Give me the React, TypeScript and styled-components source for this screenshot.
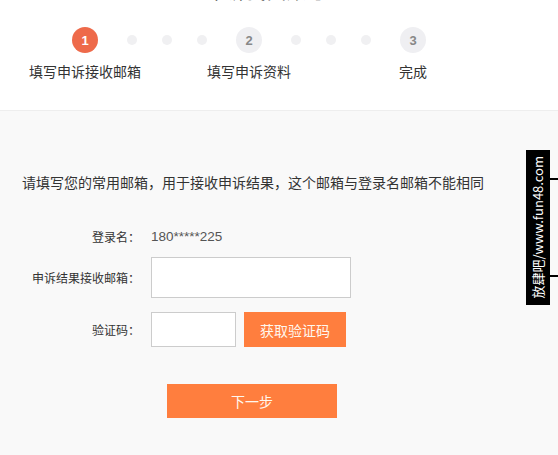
import React from "react";
import styled, { createGlobalStyle } from "styled-components";

const GlobalStyle = createGlobalStyle`
  html, body {
    margin: 0;
    padding: 0;
    background: #f9f9f9;
    font-family: "Noto Sans CJK SC", "Microsoft YaHei", sans-serif;
    color: #333;
  }
  * { box-sizing: border-box; }
`;

const steps = [
  { num: 1, label: "填写申诉接收邮箱" },
  { num: 2, label: "填写申诉资料" },
  { num: 3, label: "完成" },
];

const App = () => {
  return (
    <Page>
      <GlobalStyle />
      <Header>
        <Title>申诉找回账号</Title>
        <Steps>
          {steps.map((s, i) => (
            <React.Fragment key={s.num}>
              {i > 0 && (
                <Connector>
                  <Dot />
                  <Dot />
                  <Dot />
                </Connector>
              )}
              <Step>
                <Circle $active={i === 0}>{s.num}</Circle>
                <StepLabel>{s.label}</StepLabel>
              </Step>
            </React.Fragment>
          ))}
        </Steps>
      </Header>
      <Body>
        <Intro>请填写您的常用邮箱，用于接收申诉结果，这个邮箱与登录名邮箱不能相同</Intro>
        <Form>
          <Row $top={35}>
            <Label>登录名：</Label>
            <Value>180*****225</Value>
          </Row>
          <Row $top={10}>
            <Label>申诉结果接收邮箱：</Label>
            <Input $w={200} $h={41} />
          </Row>
          <Row $top={14}>
            <Label>验证码：</Label>
            <Input $w={85} $h={35} />
            <CodeButton>获取验证码</CodeButton>
          </Row>
          <NextButton>下一步</NextButton>
        </Form>
      </Body>
      <SideBadge>
        <BadgeText>放肆吧/www.fun48.com</BadgeText>
        <BadgeLine $top={28} />
        <BadgeLine $top={125} />
      </SideBadge>
    </Page>
  );
};

const Page = styled.div`
  width: 100%;
  min-height: 100vh;
  background: #f9f9f9;
  overflow: hidden;
`;

const Header = styled.div`
  display: flow-root;
  background: #fff;
  border-bottom: 1px solid #eeeeee;
  height: 111px;
`;

const Title = styled.div`
  margin-top: -21px;
  height: 24px;
  line-height: 24px;
  font-size: 19px;
  letter-spacing: 1px;
  text-align: center;
  width: 534px;
  color: #444;
`;

const Steps = styled.div`
  display: flex;
  align-items: flex-start;
  padding-left: 72px;
  margin-top: 24px;
`;

const Step = styled.div`
  width: 26px;
  display: flex;
  flex-direction: column;
  align-items: center;
`;

const Circle = styled.div<{ $active: boolean }>`
  width: 26px;
  height: 26px;
  border-radius: 50%;
  display: flex;
  align-items: center;
  justify-content: center;
  font-family: "Liberation Sans", Arial, sans-serif;
  font-weight: 700;
  font-size: 13px;
  background: ${(p) => (p.$active ? "#ee6a4a" : "#efeff2")};
  color: ${(p) => (p.$active ? "#fff" : "#888")};
`;

const StepLabel = styled.div`
  margin-top: 8px;
  white-space: nowrap;
  font-size: 14px;
  line-height: 20px;
  color: #333;
`;

const Connector = styled.div`
  display: flex;
  align-items: center;
  gap: 25px;
  height: 26px;
  padding: 0 29px;
`;

const Dot = styled.span`
  width: 10px;
  height: 10px;
  border-radius: 50%;
  background: #f0f0f2;
`;

const Body = styled.div`
  padding: 61px 0 40px 22px;
`;

const Intro = styled.div`
  font-size: 14px;
  line-height: 20px;
  color: #333;
`;

const Form = styled.div`
  display: flex;
  flex-direction: column;
  margin-left: -22px;
`;

const Row = styled.div<{ $top: number }>`
  display: flex;
  align-items: center;
  margin-top: ${(p) => p.$top}px;
`;

const Label = styled.div`
  width: 141px;
  padding-right: 1px;
  text-align: right;
  font-size: 12px;
  line-height: 20px;
  color: #333;
  margin-right: 10px;
`;

const Value = styled.div`
  font-family: "Liberation Sans", Arial, sans-serif;
  font-size: 13.5px;
  line-height: 20px;
  color: #555;
`;

const Input = styled.input<{ $w: number; $h: number }>`
  width: ${(p) => p.$w}px;
  height: ${(p) => p.$h}px;
  border: 1px solid #cccccc;
  background: #fff;
  outline: none;
  padding: 0 8px;
`;

const CodeButton = styled.button`
  margin-left: 8px;
  width: 102px;
  height: 35px;
  border: none;
  background: #ff7e3e;
  color: #fff7ee;
  font-family: inherit;
  font-size: 14px;
  cursor: pointer;
`;

const NextButton = styled.button`
  margin: 37px 0 0 167px;
  width: 170px;
  height: 34px;
  border: none;
  background: #ff7e3e;
  color: #fff7ee;
  font-family: inherit;
  font-size: 14px;
  cursor: pointer;
`;

const SideBadge = styled.div`
  position: fixed;
  left: 526px;
  top: 150px;
  width: 24px;
  height: 155px;
  background: #000;
  display: flex;
  align-items: center;
  justify-content: center;
`;

const BadgeText = styled.div`
  writing-mode: vertical-rl;
  text-orientation: sideways;
  transform: rotate(180deg);
  color: #fff;
  font-size: 13px;
  line-height: 16px;
  white-space: nowrap;
`;

const BadgeLine = styled.div<{ $top: number }>`
  position: absolute;
  left: 24px;
  top: ${(p) => p.$top}px;
  width: 10px;
  height: 2px;
  background: #000;
`;

export default App;
